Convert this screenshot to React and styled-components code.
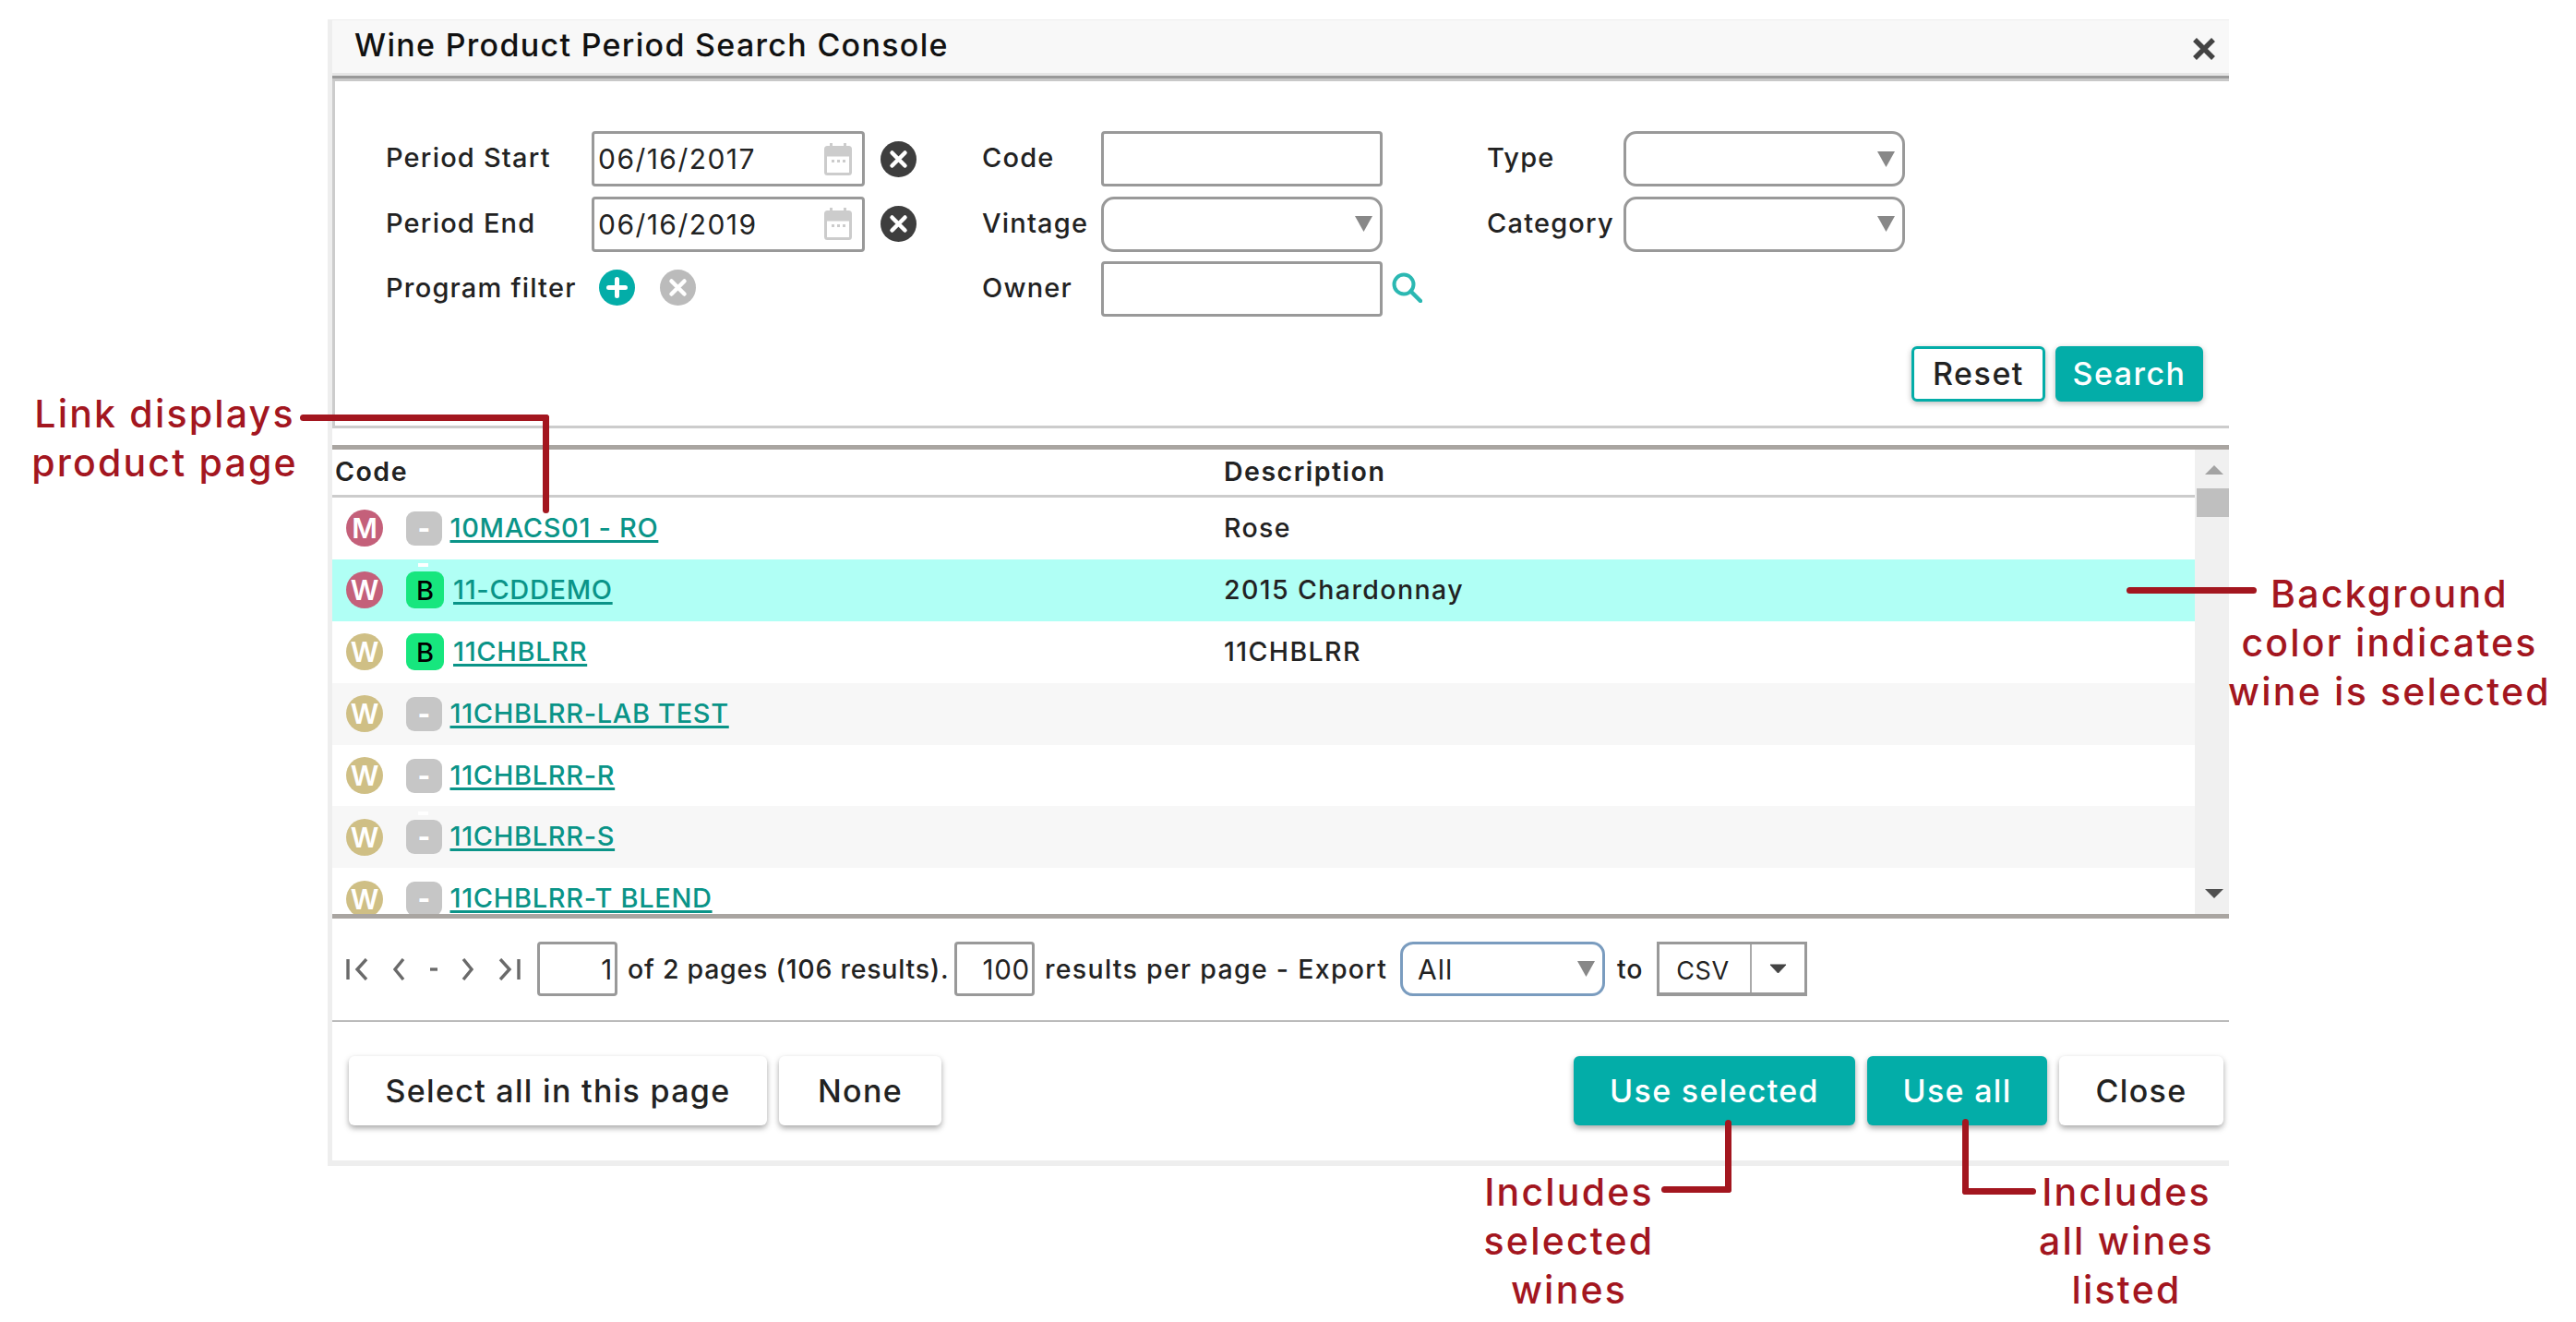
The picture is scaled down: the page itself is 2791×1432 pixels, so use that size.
import React from "react";
import styled, { createGlobalStyle } from "styled-components";

const Global = createGlobalStyle`
  html, body { margin: 0; padding: 0; background: #fff; }
  body { font-family: Inter, "Liberation Sans", sans-serif; color: #222; overflow: hidden; }
  * { box-sizing: border-box; }
`;
const TEAL = "#03ada8";
const RED = "#a3161f";

const Page = styled.div`
  position: relative; width: 2791px; height: 1432px; padding: 21px 0 0 355px;
`;
const Modal = styled.div`
  width: 2060px; height: 1242px; display: flex; flex-direction: column;
  border-left: 5px solid #eee; border-bottom: 6px solid #eee;
`;
const TitleBar = styled.div`
  flex: none; height: 67px; padding: 0 14px 7px 24px; display: flex; align-items: center; justify-content: space-between;
  background: #f8f8f8; border-top: 1px solid #eee; border-bottom: 3px solid #c8c8c8;
  box-shadow: inset 0 -3px 0 #999, inset 0 -6px 0 #e6e6e6;
`;
const Title = styled.h1`
  margin: 0 0 3px; font-size: 34px; font-weight: 500; letter-spacing: 1.3px; color: #111; white-space: nowrap;
`;
const CloseMark = styled.svg`
  width: 26px; height: 26px; margin-top: 6px; flex: none;
`;
const FormSection = styled.section`
  flex: none; height: 376px; padding: 54px 28px 0 56px; border-left: 3px solid #ccc; border-bottom: 3px solid #ccc;
`;
const FormGrid = styled.div`
  display: grid; grid-template-columns: 222px 424px 128px 419px 147px 314px;
  grid-auto-rows: 60px; row-gap: 10.5px; align-items: center;
`;
const Label = styled.label`
  font-size: 29px; font-weight: 500; color: #222; white-space: nowrap; letter-spacing: 1.2px;
  margin: 0 0 3px -1px;
`;
const Cell = styled.div`
  display: flex; align-items: center; height: 60px;
`;
const InputBox = styled.div`
  width: ${p => p.$w || 305}px; height: 60px; flex: none; border: 3px solid #999; border-radius: ${p => p.$r || 4}px;
  display: flex; align-items: center; justify-content: space-between; background: #fff;
`;
const SelectBox = styled(InputBox)`
  border-radius: 14px; justify-content: flex-end; padding-right: 8px;
`;
const DateText = styled.span`
  padding-left: 4px; font-size: 30px; font-weight: 400; color: #222; letter-spacing: 1.45px;
`;
const Calendar = styled.svg`
  width: 30px; height: 35px; margin-right: 11px; flex: none;
`;
const RoundIcon = styled.svg`
  width: 39px; height: 39px; flex: none; margin-left: ${p => p.$ml || 0}px; margin-bottom: ${p => p.$mb || 0}px;
`;
const SearchIcon = styled.svg`
  width: 33px; height: 33px; flex: none; margin: 0 0 3px 10px;
`;
const Arrow = styled.svg`
  width: 19px; height: 17px; flex: none;
`;
const FormActions = styled.div`
  display: flex; justify-content: flex-end; gap: 11px; margin-top: 31.5px;
`;
const FormButton = styled.button`
  width: ${p => p.$w}px; height: 60px; padding: 0; border-radius: 6px; font: 500 34px Inter, sans-serif;
  letter-spacing: 1.5px; cursor: pointer; box-shadow: 0 2px 6px rgba(0,0,0,.28);
  border: 3px solid ${TEAL}; background: ${p => (p.$primary ? TEAL : "#fff")}; color: ${p => (p.$primary ? "#fff" : "#222")};
`;
const TableFrame = styled.div`
  flex: none; height: 513px; margin-top: 18px; display: flex;
  border-top: 5px solid #a9a5a1; border-bottom: 5px solid #a9a5a1;
`;
const TableBody = styled.div`
  flex: 1; overflow: hidden;
`;
const HeadRow = styled.div`
  display: grid; grid-template-columns: 966px 1fr; height: 52px; align-items: center;
  border-bottom: 3px solid #ccc; padding-bottom: 2px;
`;
const HeadCell = styled.div`
  font-size: 28.5px; font-weight: 600; color: #222; padding-left: ${p => p.$pl || 0}px; letter-spacing: 1.5px;
`;
const Row = styled.div`
  display: grid; grid-template-columns: 966px 1fr; height: 66.9px; align-items: center; background: ${p => p.$bg};
`;
const CodeCell = styled.div`
  display: flex; align-items: center; padding-left: 15px;
`;
const TypeBadge = styled.span`
  width: 40px; height: 40px; border-radius: 50%; flex: none; display: flex; align-items: center; justify-content: center;
  background: ${p => p.$c}; color: #fff; font-size: 30px; font-weight: 600; margin-right: 25px;
`;
const StatusBadge = styled.span`
  position: relative; flex: none; display: flex; align-items: center; justify-content: center;
  width: ${p => (p.$on ? 41 : 38.5)}px; height: ${p => (p.$on ? 40 : 37)}px; border-radius: 9px;
  background: ${p => (p.$on ? "#17e67e" : "#c6c6c6")}; color: ${p => (p.$on ? "#000" : "#fff")};
  font-size: 29px; font-weight: ${p => (p.$on ? 500 : 800)}; margin-right: ${p => (p.$on ? 10 : 9)}px;
  &::before {
    content: ""; display: ${p => (p.$ghost ? "block" : "none")}; position: absolute; left: 13px; top: -9px;
    width: 11px; height: 4px; background: #fff;
  }
`;
const CodeLink = styled.a`
  font-size: 29px; font-weight: 500; color: #0a9488; text-decoration: underline; text-decoration-thickness: 3px;
  text-underline-offset: 3px; letter-spacing: 0.65px; white-space: nowrap; margin-bottom: 2px;
`;
const DescCell = styled.div`
  font-size: 28.5px; font-weight: 500; color: #222; letter-spacing: 1.4px; padding-bottom: 2px;
`;
const ScrollTrack = styled.div`
  flex: none; width: 37px; background: #f0f0f0; display: flex; flex-direction: column; padding: 17px 0;
`;
const ScrollArrow = styled.span`
  flex: none; width: 0; height: 0; margin-left: 11px;
  border-left: 10.5px solid transparent; border-right: 10.5px solid transparent;
  ${p => (p.$down ? "border-top: 10px solid #505050; margin-top: auto;" : "border-bottom: 10px solid #a3a3a3;")}
`;
const ScrollThumb = styled.span`
  flex: none; width: 35px; height: 31px; margin: 15px 0 0 2px; background: #bfbfbf;
`;
const Pager = styled.div`
  flex: none; height: 112px; padding: 25px 0 0 15px; display: flex; align-items: flex-start; gap: 12px;
  border-bottom: 2px solid #bbb;
`;
const PagerNav = styled.div`
  flex: none; width: 189px; margin-right: 6px; height: 59px; display: flex; align-items: center; justify-content: space-between;
`;
const NavIcon = styled.svg`
  width: ${p => p.$w}px; height: 24px; flex: none;
`;
const PagerField = styled.div`
  flex: none; width: 87px; height: 59px; border: 3px solid #999; border-radius: 4px; display: flex; align-items: center;
  justify-content: flex-end; padding-right: 2px; font-size: 29.5px; font-weight: 400; letter-spacing: 0.8px;
`;
const PagerText = styled.span`
  flex: none; width: ${p => p.$w}px; height: 59px; margin-left: ${p => p.$ml || 0}px; display: flex; align-items: center;
  font-size: 28.5px; font-weight: 500; letter-spacing: ${p => p.$ls || "0.75px"}; white-space: pre; color: #222;
`;
const ExportSelect = styled.div`
  flex: none; width: 222px; height: 59px; border: 3px solid #7a9cbf; border-radius: 14px; display: flex; align-items: center;
  justify-content: space-between; padding: 0 8px 0 16px; font-size: 30px; font-weight: 400; letter-spacing: 1px;
`;
const CsvBox = styled.div`
  flex: none; width: 163px; height: 59px; border: 3px solid #999; border-bottom-width: 4px; display: flex;
`;
const CsvValue = styled.span`
  width: 100px; display: flex; align-items: center; justify-content: center; border-right: 2px solid #aaa;
  font-size: 27px; font-weight: 400; padding-right: 4px; padding-top: 4px; letter-spacing: 0.6px;
`;
const CsvCaret = styled.span`
  flex: 1; display: flex; align-items: center; justify-content: center;
`;
const Footer = styled.div`
  flex: 1; display: flex; justify-content: space-between; padding: 37px 6px 0 18px;
`;
const ButtonGroup = styled.div`
  display: flex; gap: 13px; align-items: flex-start;
`;
const FootButton = styled.button`
  width: ${p => p.$w}px; height: 75px; padding: 0; border: 0; border-radius: 6px; cursor: pointer;
  font: 500 34px Inter, sans-serif; letter-spacing: 1.3px; box-shadow: 0 3px 6px rgba(0,0,0,.35);
  background: ${p => (p.$primary ? TEAL : "#fff")}; color: ${p => (p.$primary ? "#fff" : "#222")};
`;
const Note = styled.div`
  position: absolute; left: ${p => p.$x}px; top: ${p => p.$y}px; width: ${p => p.$w}px; text-align: center;
  color: ${RED}; font-size: 41px; font-weight: 500; line-height: 53px; letter-spacing: 2.2px; white-space: nowrap;
`;
const Leader = styled.span`
  position: absolute; left: ${p => p.$x}px; top: ${p => p.$y}px; width: ${p => p.$w}px; height: ${p => p.$h}px;
  background: ${RED}; border-radius: 3.5px;
`;

const Cal = () => (
  <Calendar viewBox="0 0 30 35">
    <rect x="6" y="0" width="3" height="6" fill="#ccc" />
    <rect x="21" y="0" width="3" height="6" fill="#ccc" />
    <rect x="1.5" y="4.5" width="27" height="29" rx="2" fill="#fff" stroke="#ccc" strokeWidth="3" />
    <rect x="1.5" y="4.5" width="27" height="10" fill="#ccc" />
    <rect x="8" y="18" width="3" height="3" fill="#ccc" />
    <rect x="14" y="18" width="3" height="3" fill="#ccc" />
    <rect x="20" y="18" width="3" height="3" fill="#ccc" />
  </Calendar>
);
const Cross = ({ color, ml, mb }) => (
  <RoundIcon viewBox="0 0 39 39" $ml={ml} $mb={mb}>
    <circle cx="19.5" cy="19.5" r="19.5" fill={color} />
    <path d="M12.5 12.5 L26.5 26.5 M26.5 12.5 L12.5 26.5" stroke="#fff" strokeWidth="4.5" strokeLinecap="round" />
  </RoundIcon>
);
const Plus = () => (
  <RoundIcon viewBox="0 0 39 39" $ml={8} $mb={3}>
    <circle cx="19.5" cy="19.5" r="19.5" fill={TEAL} />
    <path d="M19.5 10.5 V28.5 M10.5 19.5 H28.5" stroke="#fff" strokeWidth="5" strokeLinecap="round" />
  </RoundIcon>
);
const Tri = () => (
  <Arrow viewBox="0 0 19 17"><path d="M0 0 H19 L9.5 17 Z" fill="#888" /></Arrow>
);
const rows = [
  { t: "M", c: "#c4607a", on: false, code: "10MACS01 - RO", desc: "Rose", bg: "#fff" },
  { t: "W", c: "#c4607a", on: true, ghost: true, code: "11-CDDEMO", desc: "2015 Chardonnay", bg: "#b0fff5" },
  { t: "W", c: "#cfbf85", on: true, code: "11CHBLRR", desc: "11CHBLRR", bg: "#fff" },
  { t: "W", c: "#cfbf85", on: false, code: "11CHBLRR-LAB TEST", desc: "", bg: "#f7f7f7" },
  { t: "W", c: "#cfbf85", on: false, code: "11CHBLRR-R", desc: "", bg: "#fff" },
  { t: "W", c: "#cfbf85", on: false, ghost: true, code: "11CHBLRR-S", desc: "", bg: "#f7f7f7" },
  { t: "W", c: "#cfbf85", on: false, code: "11CHBLRR-T BLEND", desc: "", bg: "#fff" },
];
const nav = (w, d) => (
  <NavIcon $w={w} viewBox={`0 0 ${w} 24`}>
    <path d={d} fill="none" stroke="#6a6a6a" strokeWidth="3.4" />
  </NavIcon>
);

export default function App() {
  return (
    <>
      <Global />
      <Page>
        <Modal>
          <TitleBar>
            <Title>Wine Product Period Search Console</Title>
            <CloseMark viewBox="0 0 26 26">
              <path d="M3 3 L23 23 M23 3 L3 23" stroke="#444" strokeWidth="5.5" />
            </CloseMark>
          </TitleBar>
          <FormSection>
            <FormGrid>
              <Label>Period Start</Label>
              <Cell><InputBox $w={296}><DateText>06/16/2017</DateText><Cal /></InputBox><Cross color="#3e3e3e" ml={17} /></Cell>
              <Label>Code</Label>
              <Cell><InputBox /></Cell>
              <Label>Type</Label>
              <Cell><SelectBox><Tri /></SelectBox></Cell>

              <Label>Period End</Label>
              <Cell><InputBox $w={296}><DateText>06/16/2019</DateText><Cal /></InputBox><Cross color="#3e3e3e" ml={17} /></Cell>
              <Label>Vintage</Label>
              <Cell><SelectBox><Tri /></SelectBox></Cell>
              <Label>Category</Label>
              <Cell><SelectBox><Tri /></SelectBox></Cell>

              <Label>Program filter</Label>
              <Cell><Plus /><Cross color="#bbb" ml={27} mb={3} /></Cell>
              <Label>Owner</Label>
              <Cell>
                <InputBox />
                <SearchIcon viewBox="0 0 33 33">
                  <circle cx="13" cy="13" r="10.5" fill="none" stroke="#2bb8b2" strokeWidth="4" />
                  <path d="M20.5 20.5 L31 31" stroke="#2bb8b2" strokeWidth="4.5" strokeLinecap="round" />
                </SearchIcon>
              </Cell>
            </FormGrid>
            <FormActions>
              <FormButton $w={145}>Reset</FormButton>
              <FormButton $w={160} $primary>Search</FormButton>
            </FormActions>
          </FormSection>

          <TableFrame>
            <TableBody>
              <HeadRow>
                <HeadCell $pl={3}>Code</HeadCell>
                <HeadCell>Description</HeadCell>
              </HeadRow>
              {rows.map(r => (
                <Row key={r.code} $bg={r.bg}>
                  <CodeCell>
                    <TypeBadge $c={r.c}>{r.t}</TypeBadge>
                    <StatusBadge $on={r.on} $ghost={r.ghost}>{r.on ? "B" : "-"}</StatusBadge>
                    <CodeLink href="#">{r.code}</CodeLink>
                  </CodeCell>
                  <DescCell>{r.desc}</DescCell>
                </Row>
              ))}
            </TableBody>
            <ScrollTrack>
              <ScrollArrow />
              <ScrollThumb />
              <ScrollArrow $down />
            </ScrollTrack>
          </TableFrame>

          <Pager>
            <PagerNav>
              {nav(24, "M2 1 V23 M22 1 L12 12 L22 23")}
              {nav(13, "M11 1 L2 12 L11 23")}
              {nav(8, "M0 12 H8")}
              {nav(13, "M2 1 L11 12 L2 23")}
              {nav(24, "M2 1 L12 12 L2 23 M22 1 V23")}
            </PagerNav>
            <PagerField>1</PagerField>
            <PagerText $w={342} $ml={-1}>of 2 pages (106 results).</PagerText>
            <PagerField>100</PagerField>
            <PagerText $w={373} $ml={-1} $ls="1.3px">results per page - Export</PagerText>
            <ExportSelect>All<Tri /></ExportSelect>
            <PagerText $w={31} $ml={1}>to</PagerText>
            <CsvBox>
              <CsvValue>CSV</CsvValue>
              <CsvCaret>
                <svg width="19" height="11" viewBox="0 0 19 11"><path d="M1 1 H18 L9.5 10 Z" fill="#444" stroke="#444" strokeLinejoin="round" /></svg>
              </CsvCaret>
            </CsvBox>
          </Pager>

          <Footer>
            <ButtonGroup>
              <FootButton $w={453}>Select all in this page</FootButton>
              <FootButton $w={176}>None</FootButton>
            </ButtonGroup>
            <ButtonGroup>
              <FootButton $w={305} $primary>Use selected</FootButton>
              <FootButton $w={195} $primary>Use all</FootButton>
              <FootButton $w={178}>Close</FootButton>
            </ButtonGroup>
          </Footer>
        </Modal>

        <Note $x={0} $y={422} $w={357}>Link displays<br />product page</Note>
        <Note $x={2389} $y={617} $w={400}>Background<br />color indicates<br />wine is selected</Note>
        <Note $x={1500} $y={1265} $w={400}>Includes<br />selected<br />wines</Note>
        <Note $x={2104} $y={1265} $w={400}>Includes<br />all wines<br />listed</Note>

        <Leader $x={325} $y={449} $w={270} $h={7} />
        <Leader $x={588} $y={449} $w={7} $h={107} />
        <Leader $x={2304} $y={636} $w={141} $h={7} />
        <Leader $x={1869} $y={1213} $w={7} $h={79} />
        <Leader $x={1800} $y={1285} $w={76} $h={7} />
        <Leader $x={2126} $y={1212} $w={7} $h={82} />
        <Leader $x={2126} $y={1287} $w={80} $h={7} />
      </Page>
    </>
  );
}
